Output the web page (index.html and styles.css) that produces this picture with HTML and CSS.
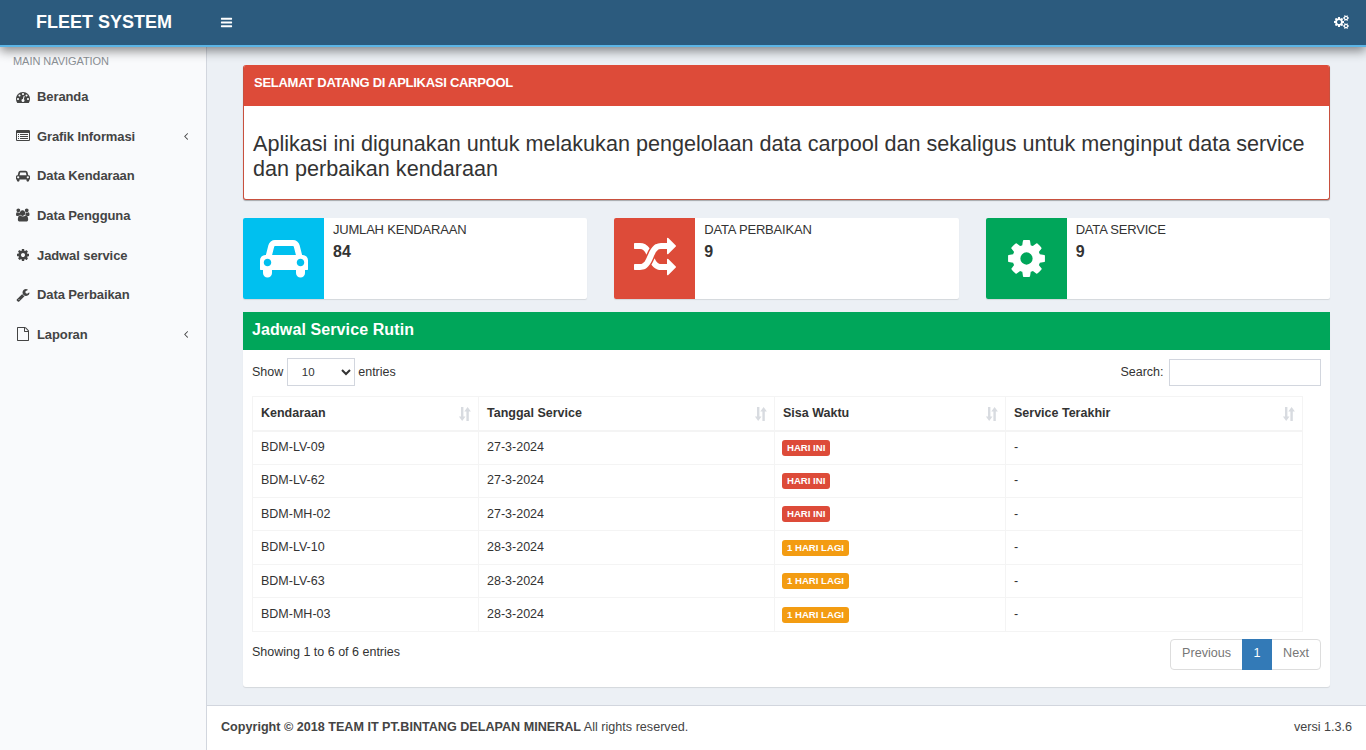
FILE: index.html
```html
<!DOCTYPE html>
<html lang="en">
<head>
    <meta charset="UTF-8">
    <meta name="viewport" content="width=device-width, initial-scale=1.0">
    <title>Fleet System</title>
    <link rel="stylesheet" href="styles.css">
</head>
<body>
    <svg class="icon-defs" xmlns="http://www.w3.org/2000/svg">
        <symbol id="i-bars" viewBox="0 0 1792 1792"><path d="M1664 1344v128q0 26-19 45t-45 19h-1408q-26 0-45-19t-19-45v-128q0-26 19-45t45-19h1408q26 0 45 19t19 45zm0-512v128q0 26-19 45t-45 19h-1408q-26 0-45-19t-19-45v-128q0-26 19-45t45-19h1408q26 0 45 19t19 45zm0-512v128q0 26-19 45t-45 19h-1408q-26 0-45-19t-19-45v-128q0-26 19-45t45-19h1408q26 0 45 19t19 45z"/></symbol>
        <symbol id="i-cog" viewBox="0 0 1792 1792"><path d="M1152 896q0-106-75-181t-181-75-181 75-75 181 75 181 181 75 181-75 75-181zm512-109v222q0 12-8 23t-20 13l-185 28q-19 54-39 91 35 50 107 138 10 12 10 25t-9 23q-27 37-99 108t-94 71q-12 0-26-9l-138-108q-44 23-91 38-16 136-29 186-7 28-36 28h-222q-14 0-24.500-8.500t-11.500-21.500l-28-184q-49-16-90-37l-141 107q-10 9-25 9-14 0-25-11-126-114-165-168-7-10-7-23 0-12 8-23 15-21 51-66.500t54-70.500q-27-50-41-99l-183-27q-13-2-21-12.500t-8-23.500v-222q0-12 8-23t19-13l186-28q14-46 39-92-40-57-107-138-10-12-10-24 0-10 9-23 26-36 98.500-107.500t94.500-71.500q13 0 26 10l138 107q44-23 91-38 16-136 29-186 7-28 36-28h222q14 0 24.500 8.500t11.500 21.500l28 184q49 16 90 37l142-107q9-9 24-9 13 0 25 10 129 119 165 170 7 8 7 22 0 12-8 23-15 21-51 66.500t-54 70.500q26 50 41 98l183 28q13 2 21 12.500t8 23.500z"/></symbol>
        <symbol id="i-cogs" viewBox="0 0 1920 1792"><path d="M896 896q0-106-75-181t-181-75-181 75-75 181 75 181 181 75 181-75 75-181zm768 512q0-52-38-90t-90-38-90 38-38 90q0 53 37.500 90.500t90.500 37.500 90.500-37.500 37.500-90.500zm0-1024q0-52-38-90t-90-38-90 38-38 90q0 53 37.500 90.500t90.500 37.500 90.500-37.500 37.500-90.500zm-384 421v185q0 10-7 19.500t-16 10.500l-155 24q-11 35-32 76 34 48 90 115 7 11 7 20 0 12-7 19-23 30-82.500 89.500t-78.500 59.500q-11 0-21-7l-115-90q-37 19-77 31-11 108-23 155-7 24-30 24h-186q-11 0-20-7.500t-10-17.500l-23-153q-34-10-75-31l-118 89q-7 7-20 7-11 0-21-8-144-133-144-160 0-9 7-19 10-14 41-53t47-61q-23-44-35-82l-152-24q-10-1-17-9.500t-7-19.500v-185q0-10 7-19.500t16-10.500l155-24q11-35 32-76-34-48-90-115-7-11-7-20 0-12 7-20 22-30 82-89t79-59q11 0 21 7l115 90q34-18 77-32 11-108 23-154 7-24 30-24h186q11 0 20 7.500t10 17.500l23 153q34 10 75 31l118-89q8-7 20-7 11 0 21 8 144 133 144 160 0 8-7 19-12 16-42 54t-45 60q23 48 34 82l152 23q10 2 17 10.500t7 19.500zm640 533v140q0 16-149 31-12 27-30 52 51 113 51 138 0 4-4 7-122 71-124 71-8 0-46-47t-52-68q-20 2-30 2t-30-2q-14 21-52 68t-46 47q-2 0-124-71-4-3-4-7 0-25 51-138-18-25-30-52-149-15-149-31v-140q0-16 149-31 13-29 30-52-51-113-51-138 0-4 4-7 4-2 35-20t59-34 30-16q8 0 46 46.500t52 67.500q20-2 30-2t30 2q51-71 92-112l6-2q4 0 124 70 4 3 4 7 0 25-51 138 17 23 30 52 149 15 149 31zm0-1024v140q0 16-149 31-12 27-30 52 51 113 51 138 0 4-4 7-122 71-124 71-8 0-46-47t-52-68q-20 2-30 2t-30-2q-14 21-52 68t-46 47q-2 0-124-71-4-3-4-7 0-25 51-138-18-25-30-52-149-15-149-31v-140q0-16 149-31 13-29 30-52-51-113-51-138 0-4 4-7 4-2 35-20t59-34 30-16q8 0 46 46.500t52 67.500q20-2 30-2t30 2q51-71 92-112l6-2q4 0 124 70 4 3 4 7 0 25-51 138 17 23 30 52 149 15 149 31z"/></symbol>
        <symbol id="i-car" viewBox="0 0 2048 1792"><path d="M480 1088q0-66-47-113t-113-47-113 47-47 113 47 113 113 47 113-47 47-113zm36-320h1016l-89-357q-2-8-14-17.500t-21-9.500h-768q-9 0-21 9.500t-14 17.500zm1372 320q0-66-47-113t-113-47-113 47-47 113 47 113 113 47 113-47 47-113zm160-96v384q0 14-9 23t-23 9h-96v128q0 80-56 136t-136 56-136-56-56-136v-128h-1024v128q0 80-56 136t-136 56-136-56-56-136v-128h-96q-14 0-23-9t-9-23v-384q0-93 65.500-158.500t158.500-65.500h28l105-419q23-94 104-157.500t179-63.500h768q98 0 179 63.500t104 157.500l105 419h28q93 0 158.500 65.500t65.500 158.500z"/></symbol>
        <symbol id="i-users" viewBox="0 0 1920 1792"><path d="M593 896q-162 5-265 128h-134q-82 0-138-40.500t-56-118.500q0-353 124-353 6 0 43.500 21t97.500 42.500 119 21.500q67 0 133-23-5 37-5 66 0 139 81 256zm1071 637q0 120-73 189.500t-194 69.500h-874q-121 0-194-69.500t-73-189.500q0-53 3.500-103.500t14-109 26.500-108.500 43-97.500 62-81 85.500-53.500 111.500-20q10 0 43 21.500t73 48 107 48 135 21.500 135-21.500 107-48 73-48 43-21.500q61 0 111.500 20t85.500 53.500 62 81 43 97.500 26.500 108.500 14 109 3.500 103.500zm-1088-1277q0 106-75 181t-181 75-181-75-75-181 75-181 181-75 181 75 75 181zm704 384q0 159-112.500 271.500t-271.500 112.500-271.500-112.500-112.500-271.500 112.500-271.500 271.500-112.500 271.500 112.500 112.500 271.500zm576 225q0 78-56 118.500t-138 40.500h-134q-103-123-265-128 81-117 81-256 0-29-5-66 66 23 133 23 59 0 119-21.500t97.500-42.500 43.500-21q124 0 124 353zm-128-609q0 106-75 181t-181 75-181-75-75-181 75-181 181-75 181 75 75 181z"/></symbol>
        <symbol id="i-wrench" viewBox="0 0 1792 1792"><path d="M448 1472q0-26-19-45t-45-19-45 19-19 45 19 45 45 19 45-19 19-45zm644-420l-682 682q-37 37-90 37-52 0-91-37l-106-108q-38-36-38-90 0-53 38-91l681-681q39 98 114.500 173.500t173.500 114.500zm634-435q0 39-23 106-47 134-164.500 217.500t-258.500 83.500q-185 0-316.500-131.500t-131.500-316.500 131.500-316.500 316.500-131.500q58 0 121.500 16.500t107.500 46.500q16 11 16 28t-16 28l-293 169v224l193 107q5-3 79-48.500t135.500-81 70.500-35.500q15 0 23.500 10t8.500 25z"/></symbol>
        <symbol id="i-file" viewBox="0 0 1792 1792"><path d="M1596 380q28 28 48 76t20 88v1152q0 40-28 68t-68 28h-1344q-40 0-68-28t-28-68v-1600q0-40 28-68t68-28h896q40 0 88 20t76 48zm-444-244v376h376q-10-29-22-41l-313-313q-12-12-41-22zm384 1528v-1024h-416q-40 0-68-28t-28-68v-416h-768v1536h1280z"/></symbol>
        <symbol id="i-angle" viewBox="0 0 1792 1792"><path d="M1203 544q0 13-10 23l-393 393 393 393q10 10 10 23t-10 23l-50 50q-10 10-23 10t-23-10l-466-466q-10-10-10-23t10-23l466-466q10-10 23-10t23 10l50 50q10 10 10 23z"/></symbol>
        <symbol id="i-random" viewBox="0 0 1792 1792"><path d="M666 481q-60 92-137 273-22-45-37-72.500t-40.500-63.500-51-56.500-63-35-81.500-14.500h-224q-14 0-23-9t-9-23v-192q0-14 9-23t23-9h224q250 0 410 225zm1126 799q0 14-9 23l-320 320q-9 9-23 9-13 0-22.500-9.500t-9.500-22.500v-192q-32 0-85 .5t-81 1-73-1-71-5-64-10.500-63-18.500-58-28.500-59-40-55-53.500-56-69.500q59-93 136-273 22 45 37 72.500t40.500 63.500 51 56.500 63 35 81.500 14.500h256v-192q0-14 9-23t23-9q12 0 24 10l319 319q9 9 9 23zm0-896q0 14-9 23l-320 320q-9 9-23 9-13 0-22.500-9.500t-9.500-22.500v-192h-256q-48 0-87 15t-69 45-51 61.500-45 77.500q-32 62-78 171-29 66-49.500 111t-54 105-64 100-74 83-90 68.500-106.500 42-128 16.500h-224q-14 0-23-9t-9-23v-192q0-14 9-23t23-9h224q48 0 87-15t69-45 51-61.500 45-77.500q32-62 78-171 29-66 49.500-111t54-105 64-100 74-83 90-68.500 106.500-42 128-16.500h256v-192q0-14 9-23t23-9q12 0 24 10l319 319q9 9 9 23z"/></symbol>
        <symbol id="i-dash" viewBox="0 0 1792 1792"><path d="M384 1152q0-53-37.500-90.500t-90.500-37.500-90.500 37.500-37.500 90.500 37.500 90.500 90.500 37.500 90.500-37.500 37.500-90.500zm192-448q0-53-37.500-90.500t-90.500-37.500-90.500 37.500-37.500 90.500 37.500 90.500 90.500 37.500 90.500-37.500 37.500-90.500zm428 481l101-382q6-26-7.500-48.500t-38.500-29.500-48 6.500-30 39.500l-101 382q-60 5-107 43.500t-63 98.500q-20 77 20 146t117 89 146-20 89-117q16-60-6-117t-72-91zm660-33q0-53-37.500-90.500t-90.500-37.500-90.500 37.500-37.500 90.500 37.500 90.500 90.500 37.500 90.500-37.500 37.500-90.500zm-640-640q0-53-37.500-90.500t-90.500-37.500-90.500 37.500-37.500 90.500 37.500 90.500 90.500 37.500 90.500-37.500 37.500-90.500zm448 192q0-53-37.500-90.500t-90.500-37.500-90.500 37.500-37.500 90.500 37.500 90.500 90.500 37.500 90.500-37.500 37.500-90.500zm320 448q0 261-141 483-19 29-54 29h-1402q-35 0-54-29-141-221-141-483 0-182 71-348t191-286 286-191 348-71 348 71 286 191 191 286 71 348z"/></symbol>
        <symbol id="i-list" viewBox="0 0 1792 1792"><path d="M384 1184v64q0 13-9.500 22.500t-22.500 9.500h-64q-13 0-22.500-9.500t-9.500-22.500v-64q0-13 9.500-22.500t22.500-9.500h64q13 0 22.500 9.500t9.500 22.500zm0-256v64q0 13-9.500 22.500t-22.500 9.500h-64q-13 0-22.500-9.500t-9.500-22.500v-64q0-13 9.500-22.500t22.500-9.500h64q13 0 22.500 9.500t9.500 22.500zm0-256v64q0 13-9.500 22.500t-22.500 9.500h-64q-13 0-22.500-9.500t-9.500-22.500v-64q0-13 9.500-22.500t22.500-9.500h64q13 0 22.500 9.500t9.500 22.500zm1152 512v64q0 13-9.500 22.500t-22.500 9.500h-960q-13 0-22.500-9.500t-9.500-22.500v-64q0-13 9.500-22.500t22.500-9.500h960q13 0 22.500 9.500t9.500 22.500zm0-256v64q0 13-9.500 22.500t-22.500 9.500h-960q-13 0-22.500-9.500t-9.500-22.500v-64q0-13 9.500-22.500t22.500-9.500h960q13 0 22.500 9.500t9.500 22.500zm0-256v64q0 13-9.500 22.500t-22.500 9.500h-960q-13 0-22.500-9.500t-9.500-22.500v-64q0-13 9.500-22.500t22.500-9.500h960q13 0 22.500 9.500t9.500 22.500zm128 704v-832q0-13-9.500-22.500t-22.500-9.500h-1472q-13 0-22.500 9.500t-9.500 22.500v832q0 13 9.500 22.500t22.500 9.500h1472q13 0 22.500-9.500t9.500-22.500zm128-1088v1088q0 66-47 113t-113 47h-1472q-66 0-113-47t-47-113v-1088q0-66 47-113t113-47h1472q66 0 113 47t47 113z"/></symbol>
        <symbol id="i-sort" viewBox="0 0 13 14"><path d="M3 0h2.400v9.600h2.100L4.200 14 .9 9.600H3zM9.600 0l3.300 4.400h-2.100V14H8.400V4.400H6.300z"/></symbol>
    </svg>

    <header class="topbar">
        <div class="logo">FLEET SYSTEM</div>
        <svg class="icon toggle"><use href="#i-bars"/></svg>
        <svg class="icon settings"><use href="#i-cogs"/></svg>
    </header>

    <div class="wrapper">
        <aside class="sidebar">
            <div class="nav-title">MAIN NAVIGATION</div>
            <ul class="nav">
                <li><svg class="icon"><use href="#i-dash"/></svg>Beranda</li>
                <li><svg class="icon"><use href="#i-list"/></svg>Grafik Informasi<svg class="icon angle"><use href="#i-angle"/></svg></li>
                <li><svg class="icon"><use href="#i-car"/></svg>Data Kendaraan</li>
                <li><svg class="icon"><use href="#i-users"/></svg>Data Pengguna</li>
                <li><svg class="icon"><use href="#i-cog"/></svg>Jadwal service</li>
                <li><svg class="icon"><use href="#i-wrench"/></svg>Data Perbaikan</li>
                <li><svg class="icon"><use href="#i-file"/></svg>Laporan<svg class="icon angle"><use href="#i-angle"/></svg></li>
            </ul>
        </aside>

        <div class="main">
            <section class="content">
                <div class="welcome">
                    <div class="welcome-head">SELAMAT DATANG DI APLIKASI CARPOOL</div>
                    <div class="welcome-body">Aplikasi ini digunakan untuk melakukan pengelolaan data carpool dan sekaligus untuk menginput data service dan perbaikan kendaraan</div>
                </div>

                <div class="info-row">
                    <div class="info-box">
                        <div class="info-icon bg-blue"><svg class="icon car"><use href="#i-car"/></svg></div>
                        <div class="info-text"><span>JUMLAH KENDARAAN</span><b>84</b></div>
                    </div>
                    <div class="info-box">
                        <div class="info-icon bg-red"><svg class="icon shuffle"><use href="#i-random"/></svg></div>
                        <div class="info-text"><span>DATA PERBAIKAN</span><b>9</b></div>
                    </div>
                    <div class="info-box">
                        <div class="info-icon bg-green"><svg class="icon gear"><use href="#i-cog"/></svg></div>
                        <div class="info-text"><span>DATA SERVICE</span><b>9</b></div>
                    </div>
                </div>

                <div class="panel">
                    <div class="panel-head">Jadwal Service Rutin</div>
                    <div class="panel-body">
                        <div class="table-top">
                            <label class="length">Show
                                <select>
                                    <option>10</option>
                                    <option>25</option>
                                    <option>50</option>
                                    <option>100</option>
                                </select>
                                entries</label>
                            <label class="search">Search: <input type="search"></label>
                        </div>
                        <table class="schedule">
                            <thead>
                                <tr>
                                    <th class="col-a">Kendaraan<svg class="sort"><use href="#i-sort"/></svg></th>
                                    <th class="col-b">Tanggal Service<svg class="sort"><use href="#i-sort"/></svg></th>
                                    <th class="col-c">Sisa Waktu<svg class="sort"><use href="#i-sort"/></svg></th>
                                    <th class="col-d">Service Terakhir<svg class="sort"><use href="#i-sort"/></svg></th>
                                </tr>
                            </thead>
                            <tbody>
                                <tr><td>BDM-LV-09</td><td>27-3-2024</td><td><span class="label red">HARI INI</span></td><td>-</td></tr>
                                <tr><td>BDM-LV-62</td><td>27-3-2024</td><td><span class="label red">HARI INI</span></td><td>-</td></tr>
                                <tr><td>BDM-MH-02</td><td>27-3-2024</td><td><span class="label red">HARI INI</span></td><td>-</td></tr>
                                <tr><td>BDM-LV-10</td><td>28-3-2024</td><td><span class="label orange">1 HARI LAGI</span></td><td>-</td></tr>
                                <tr><td>BDM-LV-63</td><td>28-3-2024</td><td><span class="label orange">1 HARI LAGI</span></td><td>-</td></tr>
                                <tr><td>BDM-MH-03</td><td>28-3-2024</td><td><span class="label orange">1 HARI LAGI</span></td><td>-</td></tr>
                            </tbody>
                        </table>
                        <div class="table-bottom">
                            <div class="table-info">Showing 1 to 6 of 6 entries</div>
                            <ul class="pagination">
                                <li>Previous</li>
                                <li class="active">1</li>
                                <li>Next</li>
                            </ul>
                        </div>
                    </div>
                </div>
            </section>

            <footer class="footer">
                <div><b>Copyright &copy; 2018 TEAM IT PT.BINTANG DELAPAN MINERAL</b> All rights reserved.</div>
                <div>versi 1.3.6</div>
            </footer>
        </div>
    </div>
</body>
</html>
```

FILE: styles.css
```css
* {
    box-sizing: border-box;
}
html, body {
    height: 100%;
}
body {
    margin: 0;
    display: flex;
    flex-direction: column;
    overflow: hidden;
    font-family: "Liberation Sans", Arial, sans-serif;
    font-size: 12.5px;
    line-height: 17px;
    color: #333;
    background: #ecf0f5;
}
.icon-defs {
    display: none;
}
.icon {
    fill: currentColor;
    flex: none;
}

/* top bar */
.topbar {
    position: relative;
    z-index: 2;
    flex: none;
    height: 47px;
    display: flex;
    align-items: center;
    padding-bottom: 1px;
    background: #2c5b7e;
    border-bottom: 2px solid #5cb5e6;
    box-shadow: 0 4px 10px rgba(0, 0, 0, 0.45);
    color: #fff;
}
.logo {
    width: 220px;
    padding-left: 36px;
    font-size: 18px;
    font-weight: bold;
}
.toggle {
    width: 13px;
    height: 13px;
}
.settings {
    width: 15px;
    height: 14px;
    margin-left: auto;
    margin-right: 17px;
}

.wrapper {
    flex: 1;
    display: flex;
    min-height: 0;
}

/* sidebar */
.sidebar {
    flex: none;
    width: 207px;
    background: #f9fafc;
    border-right: 1px solid #d2d6de;
}
.nav-title {
    padding: 7px 0 0 13px;
    height: 29.7px;
    font-size: 11px;
    line-height: 15px;
    letter-spacing: -0.05px;
    color: #8a8f94;
}
.nav {
    list-style: none;
    margin: 0;
    padding: 0;
}
.nav li {
    height: 39.67px;
    display: flex;
    align-items: center;
    padding: 0 14px 0 16px;
    font-size: 13px;
    letter-spacing: -0.1px;
    font-weight: bold;
    color: #444;
}
.nav li .icon {
    width: 14px;
    height: 14px;
    margin-right: 7px;
}
.nav li .angle {
    width: 12px;
    height: 12px;
    margin: 0 0 0 auto;
}

/* page content */
.main {
    flex: 1;
    min-width: 0;
    display: flex;
    flex-direction: column;
}
.content {
    flex: 1;
    padding: 18px 36px 0;
}
.welcome {
    height: 135px;
    background: #fff;
    border: 1px solid #c8503e;
    border-top: none;
    border-radius: 3px;
    box-shadow: 0 1px 1px rgba(0, 0, 0, 0.3);
    overflow: hidden;
}
.welcome-head {
    height: 41px;
    margin: 0 -1px;
    padding: 9px 11px;
    background: #dd4b39;
    color: #fff;
    font-size: 13px;
    letter-spacing: -0.27px;
    font-weight: bold;
}
.welcome-body {
    padding: 25px 9px 0;
    font-size: 21.6px;
    line-height: 25px;
    color: #333;
}

.info-row {
    display: grid;
    grid-template-columns: repeat(3, 1fr);
    gap: 27px;
    margin-top: 18px;
}
.info-box {
    height: 81px;
    display: flex;
    background: #fff;
    border-radius: 2px;
    box-shadow: 0 1px 1px rgba(0, 0, 0, 0.1);
    overflow: hidden;
}
.info-icon {
    flex: none;
    width: 81px;
    display: flex;
    align-items: center;
    justify-content: center;
    color: #fff;
}
.bg-blue { background: #00c0ef; }
.bg-red { background: #dd4b39; }
.bg-green { background: #00a65a; }
.car {
    width: 48px;
    height: 42px;
    margin-bottom: 2px;
}
.shuffle {
    width: 42px;
    height: 42px;
    margin-bottom: 2px;
}
.gear {
    width: 43px;
    height: 43px;
}
.info-text {
    padding: 3px 9px;
    font-size: 13px;
    letter-spacing: -0.2px;
    line-height: 17px;
}
.info-text span {
    display: block;
}
.info-text b {
    display: block;
    margin-top: 4px;
    font-size: 16px;
    letter-spacing: 0;
    line-height: 20px;
}

/* schedule table */
.panel {
    margin-top: 13px;
    height: 375px;
    background: #fff;
    border-radius: 3px;
    box-shadow: 0 1px 1px rgba(0, 0, 0, 0.1);
}
.panel-head {
    height: 38px;
    padding: 8px 9px;
    background: #00a65a;
    color: #fff;
    font-size: 16px;
    letter-spacing: 0.1px;
    line-height: 19px;
    font-weight: bold;
}
.panel-body {
    padding: 8px 9px 0;
}
.table-top {
    display: flex;
    justify-content: space-between;
    align-items: center;
    height: 28px;
}
.length select {
    width: 68px;
    height: 28px;
    padding: 0 10px;
    border: 1px solid #d2d6de;
    background: #fff;
    font-family: inherit;
    font-size: 11.5px;
    color: #333;
}
.search input {
    width: 152px;
    height: 27px;
    margin-left: 2px;
    border: 1px solid #d2d6de;
    vertical-align: middle;
}
.schedule {
    width: 1050px;
    margin-top: 10px;
    border-collapse: collapse;
    table-layout: fixed;
}
.schedule th, .schedule td {
    border: 1px solid #f4f4f4;
    text-align: left;
    padding: 0 8px;
}
.schedule th {
    position: relative;
    height: 34.3px;
    border-bottom-width: 2px;
}
.schedule td {
    height: 33.4px;
}
.col-a { width: 226px; }
.col-b { width: 296px; }
.col-c { width: 231px; }
.col-d { width: 297px; }
.sort {
    position: absolute;
    right: 7px;
    top: 10px;
    width: 13px;
    height: 14px;
    fill: #d8dbe0;
}
.label {
    display: inline-block;
    margin-left: -1px;
    padding: 0 5px;
    height: 16px;
    border-radius: 3px;
    color: #fff;
    font-size: 9.6px;
    font-weight: bold;
    line-height: 16px;
    vertical-align: middle;
}
.label.red { background: #dd4b39; }
.label.orange { background: #f39c12; }
.table-bottom {
    display: flex;
    justify-content: space-between;
    align-items: flex-start;
    margin-top: 7.4px;
}
.table-info {
    padding-top: 5px;
}
.pagination {
    display: flex;
    list-style: none;
    margin: 0;
    padding: 0;
    height: 31px;
    border: 1px solid #ddd;
    border-radius: 4px;
    font-size: 12.6px;
    color: #777;
}
.pagination li {
    padding: 5px 11px;
}
.pagination .active {
    margin: -1px 0;
    padding: 6px 11.5px;
    background: #337ab7;
    color: #fff;
}

.footer {
    flex: none;
    height: 45px;
    display: flex;
    justify-content: space-between;
    align-items: center;
    padding: 0 14px 2px;
    background: #fff;
    border-top: 1px solid #d2d6de;
    font-size: 12.6px;
    color: #444;
}
```
